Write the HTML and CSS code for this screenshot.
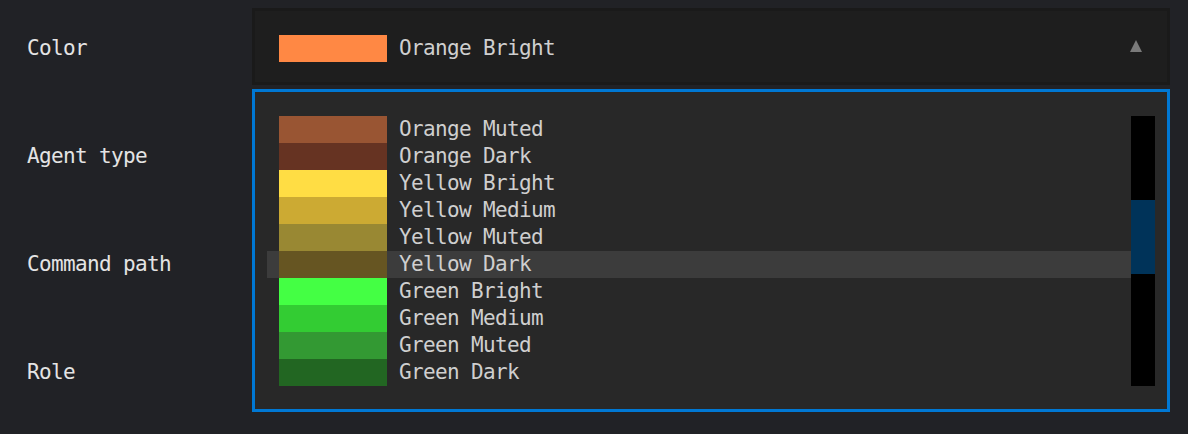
FILE: index.html
```html
<!DOCTYPE html>
<html>
<head>
<meta charset="utf-8">
<link rel="stylesheet" href="styles.css">
</head>
<body>
<div class="form">
  <div class="row">
    <div class="label">Color</div>
    <div class="control">
      <div class="select">
        <span class="swatch" style="background:#ff8844"></span>
        <span class="value">Orange Bright</span>
        <span class="caret"></span>
      </div>
      <div class="dropdown">
        <div class="list">
          <div class="items">
            <div class="item"><span class="swatch" style="background:#995533"></span><span>Orange Muted</span></div>
            <div class="item"><span class="swatch" style="background:#663322"></span><span>Orange Dark</span></div>
            <div class="item"><span class="swatch" style="background:#ffdd44"></span><span>Yellow Bright</span></div>
            <div class="item"><span class="swatch" style="background:#ccaa33"></span><span>Yellow Medium</span></div>
            <div class="item"><span class="swatch" style="background:#998833"></span><span>Yellow Muted</span></div>
            <div class="item active"><span class="swatch" style="background:#665522"></span><span>Yellow Dark</span></div>
            <div class="item"><span class="swatch" style="background:#44ff44"></span><span>Green Bright</span></div>
            <div class="item"><span class="swatch" style="background:#33cc33"></span><span>Green Medium</span></div>
            <div class="item"><span class="swatch" style="background:#339933"></span><span>Green Muted</span></div>
            <div class="item"><span class="swatch" style="background:#226622"></span><span>Green Dark</span></div>
          </div>
          <div class="scrollbar"><div class="thumb"></div></div>
        </div>
      </div>
    </div>
  </div>
  <div class="row">
    <div class="label">Agent type</div>
    <div class="control"></div>
  </div>
  <div class="row">
    <div class="label">Command path</div>
    <div class="control"></div>
  </div>
  <div class="row">
    <div class="label">Role</div>
    <div class="control"></div>
  </div>
</div>
</body>
</html>
```
FILE: styles.css
```css
html, body {
  margin: 0;
  padding: 0;
  background: #212226;
  height: 100%;
  overflow: hidden;
}
body {
  font-family: "DejaVu Sans Mono", "Liberation Mono", monospace;
  font-size: 21px;
  letter-spacing: -0.64px;
  color: #e6e6e6;
}
.form {
  display: flex;
  flex-direction: column;
  gap: 31px;
  padding: 8px 18px 0 27px;
}
.row {
  display: grid;
  grid-template-columns: 225px 918px;
  height: 77px;
  align-items: center;
}
.label {
  line-height: 27px;
  color: #e4e4e4;
  padding-top: 3px;
}
.control {
  position: relative;
  height: 100%;
}
.select {
  box-sizing: border-box;
  height: 77px;
  border: 3px solid #1a1a1a;
  background: #1e1e1e;
  display: flex;
  align-items: center;
  padding: 4px 25px 0 24px;
}
.swatch {
  display: block;
  width: 108px;
  height: 27px;
  flex: none;
}
.value {
  margin-left: 12px;
  line-height: 27px;
  color: #cfcfcf;
  flex: 1;
}
.caret {
  width: 0;
  height: 0;
  border-left: 6px solid transparent;
  border-right: 6px solid transparent;
  border-bottom: 12px solid #7a7a7a;
  margin-top: -6px;
}
.dropdown {
  position: absolute;
  top: 81px;
  left: 0;
  width: 918px;
  box-sizing: border-box;
  border: 3px solid #0078d4;
  background: #282828;
  padding: 24px 12px 23px 12px;
  z-index: 10;
}
.list {
  display: flex;
}
.items {
  flex: 1;
  display: flex;
  flex-direction: column;
}
.item {
  display: flex;
  align-items: center;
  height: 27px;
  padding-left: 12px;
  gap: 12px;
  line-height: 27px;
  color: #cfcfcf;
}
.item.active {
  background: #3c3c3c;
}
.scrollbar {
  width: 24px;
  background: #000;
  position: relative;
  flex: none;
}
.thumb {
  position: absolute;
  left: 0;
  right: 0;
  top: 84px;
  height: 74px;
  background: #003359;
}
```
